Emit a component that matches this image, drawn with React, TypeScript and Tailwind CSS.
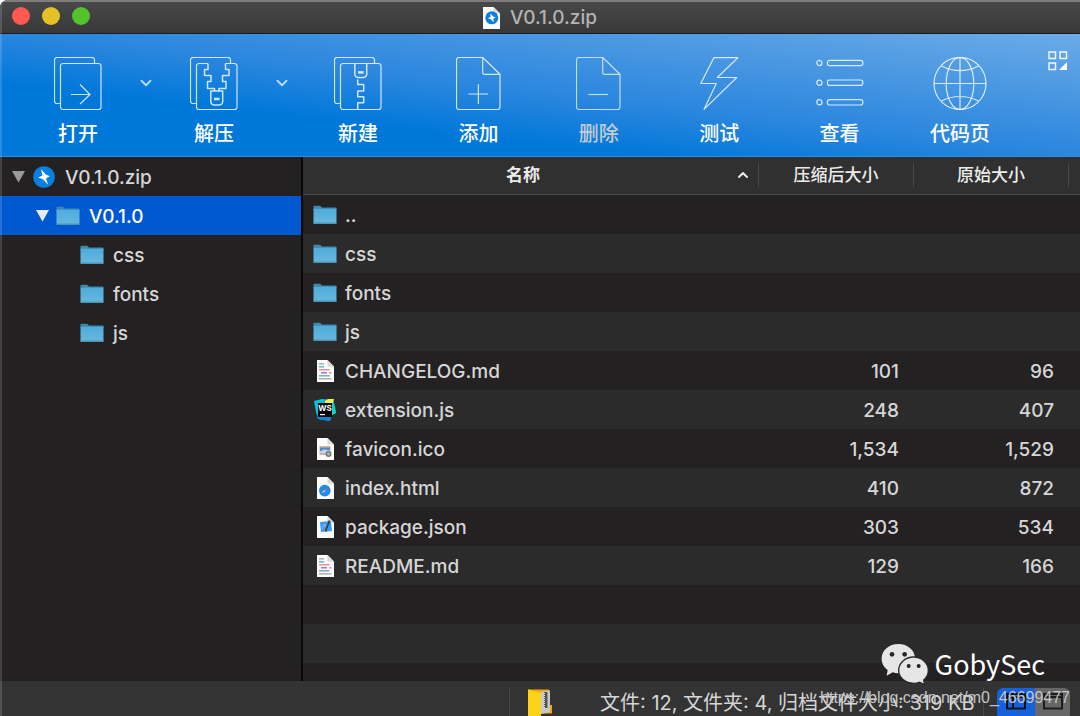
import { useState } from 'react';
import type { ReactNode } from 'react';
import { ChevronDown, ChevronUp } from 'lucide-react';

type IconKind = 'folder' | 'text' | 'webstorm' | 'image' | 'html' | 'xcode';

interface Entry {
  name: string;
  icon: IconKind;
  packed?: string;
  size?: string;
}

const entries: Entry[] = [
  { name: '..', icon: 'folder' },
  { name: 'css', icon: 'folder' },
  { name: 'fonts', icon: 'folder' },
  { name: 'js', icon: 'folder' },
  { name: 'CHANGELOG.md', icon: 'text', packed: '101', size: '96' },
  { name: 'extension.js', icon: 'webstorm', packed: '248', size: '407' },
  { name: 'favicon.ico', icon: 'image', packed: '1,534', size: '1,529' },
  { name: 'index.html', icon: 'html', packed: '410', size: '872' },
  { name: 'package.json', icon: 'xcode', packed: '303', size: '534' },
  { name: 'README.md', icon: 'text', packed: '129', size: '166' },
];

/* ---------- toolbar icons ---------- */

function LineIcon({ width, children }: { width: number; children: ReactNode }) {
  return (
    <svg
      width={width}
      height="54"
      viewBox={`0 0 ${width} 54`}
      fill="none"
      stroke="currentColor"
      strokeWidth="1.2"
      strokeLinejoin="round"
      aria-hidden="true"
    >
      {children}
    </svg>
  );
}

const backSheet = 'M6.5 46.5H3A2.5 2.5 0 0 1 .5 44V3A2.5 2.5 0 0 1 3 .5H38A2.5 2.5 0 0 1 40.5 3V6.5';

function OpenIcon() {
  return (
    <LineIcon width={48}>
      <path d={backSheet} />
      <rect x="6.5" y="6.5" width="40.5" height="46" rx="2.5" />
      <path d="M17 37.5H36M26 27.5L36 37.5L26 47" />
    </LineIcon>
  );
}

function ExtractIcon() {
  return (
    <LineIcon width={48}>
      <path d={backSheet} />
      <path d="M18 6.5H9A2.5 2.5 0 0 0 6.5 9V50A2.5 2.5 0 0 0 9 52.5H44.5A2.5 2.5 0 0 0 47 50V9A2.5 2.5 0 0 0 44.5 6.5H35.5" />
      <path
        strokeWidth="1.5"
        d="M18 6.5V12.5H14.5V18.5H21V24.5H17.5V31.5H24.5V34M35.5 6.5V12.5H39V18.5H32.5V24.5H36V31.5H29V34"
      />
      <path strokeWidth="1.5" d="M20.8 34H32.7V44.5A3.5 3.5 0 0 1 29.2 48H24.3A3.5 3.5 0 0 1 20.8 44.5Z" />
      <path strokeWidth="2.6" d="M24 42H29.6" />
    </LineIcon>
  );
}

function NewIcon() {
  return (
    <LineIcon width={48}>
      <path d={backSheet} />
      <rect x="6.5" y="6.5" width="40.5" height="46" rx="2.5" />
      <path strokeWidth="1.5" d="M20.8 7V17A3.5 3.5 0 0 0 24.3 20.5H29.2A3.5 3.5 0 0 0 32.7 17V7" />
      <path strokeWidth="2.6" d="M24 15.4H29.6" />
      <path strokeWidth="1.5" d="M23.7 22.5V27.5H29.7V34H23.7V39.7H29.7V45.7H23.7V52" />
    </LineIcon>
  );
}

function SheetIcon({ minus }: { minus?: boolean }) {
  return (
    <LineIcon width={45}>
      <path d="M26.7 .5H3A2.5 2.5 0 0 0 .5 3V50A2.5 2.5 0 0 0 3 52.5H41.5A2.5 2.5 0 0 0 44 50V17.3ZM26.7 .5V15.8A1.5 1.5 0 0 0 28.2 17.3H44" />
      <path d={minus ? 'M12.3 37.5H32' : 'M12.3 37H32M22.4 27.2V47'} />
    </LineIcon>
  );
}

function BoltIcon() {
  return (
    <LineIcon width={39}>
      <path d="M14 .6H38L17.3 20.5H36.7L4 52.4L16.3 26.5H.8Z" />
    </LineIcon>
  );
}

function ListIcon() {
  return (
    <LineIcon width={48}>
      {[6, 25.7, 45.3].map((y) => (
        <g key={y}>
          <circle cx="3.4" cy={y} r="2.6" />
          <rect x="11.4" y={y - 2.7} width="35.4" height="5.4" rx="2.2" />
        </g>
      ))}
    </LineIcon>
  );
}

function GlobeIcon() {
  return (
    <LineIcon width={54}>
      <circle cx="27" cy="26.5" r="26" />
      <ellipse cx="27" cy="26.5" rx="13.8" ry="26" />
      <path d="M27 .5V52.5M1 26.5H53M8.5 9Q27 18.4 45.5 9M8.5 44Q27 35 45.5 44" />
    </LineIcon>
  );
}

/* ---------- file icons ---------- */

function FolderIcon() {
  return (
    <svg width="24" height="20" viewBox="0 0 24 20" aria-hidden="true">
      <defs>
        <linearGradient id="folder" x1="0" y1="0" x2="0" y2="1">
          <stop offset="0" stopColor="#4eacdc" />
          <stop offset="1" stopColor="#69b8dc" />
        </linearGradient>
      </defs>
      <path d="M.5 4V1.5Q.5 .8 1.2 .8H7.2L9 2.6H22.8Q23.5 2.6 23.5 3.3V5H.5Z" fill="#3f88ab" />
      <path d="M.5 3.8H23.5V18Q23.5 19 22.5 19H1.5Q.5 19 .5 18Z" fill="url(#folder)" />
      <path d="M.5 17.6H23.5V18Q23.5 19 22.5 19H1.5Q.5 19 .5 18Z" fill="#4d94b5" />
    </svg>
  );
}

function Sheet({ children }: { children: ReactNode }) {
  return (
    <svg width="17" height="22" viewBox="0 0 17 22" aria-hidden="true">
      <path d="M0 0H10.5L17 6.5V22H0Z" fill="#fbfbfb" />
      <path d="M10.5 0L17 6.5H10.5Z" fill="#d9d9d9" />
      {children}
    </svg>
  );
}

function BoltBadge({ size }: { size: number }) {
  return (
    <svg width={size} height={size} viewBox="0 0 22 22" aria-hidden="true">
      <circle cx="11" cy="11" r="10.8" fill="#0a7fe0" />
      <path d="M8 3.2L12.8 8.6L16.8 10.2L13 12.4L15.2 18.8L9.8 13.2L5.2 11.6L9.4 9.6Z" fill="#fff" />
    </svg>
  );
}

function FileIcon({ kind }: { kind: IconKind }) {
  switch (kind) {
    case 'folder':
      return <FolderIcon />;
    case 'text':
      return (
        <Sheet>
          <g strokeWidth="1.4">
            <path d="M2 3.8H7" stroke="#a9a9a9" />
            <path d="M2 6.8H7" stroke="#58b5b5" />
            <path d="M2 9.8H12.5" stroke="#e58a8a" />
            <path d="M4 12.8H10" stroke="#9a62f2" />
            <path d="M12 12.8H14.5" stroke="#e58a8a" />
            <path d="M2 15.8H12.5" stroke="#58b5b5" />
            <path d="M2 18.8H14.5" stroke="#a9a9a9" />
          </g>
        </Sheet>
      );
    case 'webstorm':
      return (
        <svg width="24" height="24" viewBox="0 0 24 24" aria-hidden="true">
          <path d="M1 3L9 1L20 2L22 8L23 15L19 17L17 23L5 21L3 14Z" fill="#07c3d8" />
          <path d="M4 17L18 18L17 23L5 21Z" fill="#1482d6" />
          <path d="M12 3L15 1H21L20 5H12Z" fill="#f5ee4e" />
          <path d="M19 6L21 8L23 15L19 17Z" fill="#0dd6c0" />
          <rect x="5" y="5" width="14" height="14" fill="#080808" />
          <text x="5.2" y="13" fontSize="8" fontWeight="700" fill="#fff" fontFamily="Inter, sans-serif">WS</text>
          <path d="M7 16.6H12" stroke="#fff" strokeWidth="1.2" />
        </svg>
      );
    case 'image':
      return (
        <Sheet>
          <rect x="2.5" y="8" width="11" height="9" fill="#d8b48c" />
          <rect x="3" y="9.5" width="10" height="6" fill="#4e8bd0" />
          <path d="M3 13.5L7 11.5L13 12.5V15.5H3Z" fill="#c3d6e6" />
          <circle cx="11.5" cy="16" r="3" fill="#77767a" />
          <circle cx="11.5" cy="16" r="1.4" fill="#b8b8ba" />
        </Sheet>
      );
    case 'html':
      return (
        <Sheet>
          <circle cx="7.8" cy="13.6" r="5.8" fill="#1f8be6" />
          <path d="M10.8 10.6L8.5 14.3L7.1 12.9Z" fill="#f0624a" />
          <path d="M4.8 16.6L7.1 12.9L8.5 14.3Z" fill="#b9dcf8" />
        </Sheet>
      );
    case 'xcode':
      return (
        <Sheet>
          <path d="M3 6L14 5L15 15L4 16Z" fill="#3b9bf0" />
          <path d="M5 13.5L7.5 8L10.5 13" stroke="#7fc0f8" strokeWidth="1" fill="none" />
          <path d="M12.5 4.5L8.5 15.5" stroke="#3c3c42" strokeWidth="1.8" />
        </Sheet>
      );
  }
}

/* ---------- pieces ---------- */

interface ToolProps {
  label: string;
  icon: ReactNode;
  className?: string;
  disabled?: boolean;
}

function Tool({ label, icon, className = 'w-24', disabled }: ToolProps) {
  return (
    <button
      type="button"
      disabled={disabled}
      className={`${className} shrink-0 flex flex-col items-center gap-[9px] text-xl leading-7 font-medium ${
        disabled ? 'text-[#c3cbd4]' : 'text-white'
      }`}
    >
      <span className={disabled ? 'text-white/70' : 'text-white/80'}>{icon}</span>
      {label}
    </button>
  );
}

function DropButton({ label }: { label: string }) {
  return (
    <button type="button" aria-label={label} className="w-14 h-[52px] shrink-0 flex items-center justify-center text-white/70">
      <ChevronDown size={18} strokeWidth={2.5} />
    </button>
  );
}

interface TreeRowProps {
  name: string;
  icon: ReactNode;
  indent: string;
  expandable?: boolean;
  selected: boolean;
  onSelect: () => void;
}

function TreeRow({ name, icon, indent, expandable, selected, onSelect }: TreeRowProps) {
  return (
    <button
      type="button"
      onClick={onSelect}
      className={`${indent} h-[39px] w-full flex items-center gap-[7px] text-left ${
        selected ? 'bg-[#0058d0] text-white' : 'text-[#d6d6d6]'
      }`}
    >
      {expandable && (
        <svg
          width="13"
          height="12"
          viewBox="0 0 13 12"
          aria-hidden="true"
          className={selected ? 'text-[#e3ecfa]' : 'text-[#9b9a9b]'}
        >
          <path d="M0 0H13L6.5 11.5Z" fill="currentColor" />
        </svg>
      )}
      <span className="w-6 flex justify-center">{icon}</span>
      <span className="pl-[2px] pt-[2px]">{name}</span>
    </button>
  );
}

function WeChatLogo() {
  return (
    <svg width="48" height="42" viewBox="0 0 144 126" aria-hidden="true">
      <path d="M52 3C24 3 2 22 2 47C2 61 9 73 20 81L17 98L35 88C40 90 46 91 52 91C80 91 102 71 102 47C102 22 80 3 52 3Z" fill="#e6e6e6" />
      <path
        d="M98 42C73 42 53 60 53 82C53 104 73 121 98 121C104 121 110 120 115 118L131 125L128 111C137 104 142 94 142 82C142 60 122 42 98 42Z"
        fill="#e6e6e6"
        stroke="#2a2a2a"
        strokeWidth="4"
      />
      <g fill="#262626">
        <circle cx="33" cy="34" r="7" />
        <circle cx="71" cy="34" r="7" />
        <circle cx="83" cy="69" r="6" />
        <circle cx="113" cy="69" r="6" />
      </g>
    </svg>
  );
}

export default function App() {
  const [selected, setSelected] = useState('V0.1.0');
  const [showTree, setShowTree] = useState(true);

  return (
    <div className="relative h-screen min-h-[600px] min-w-[900px] overflow-hidden flex flex-col rounded-tl-lg bg-[#232122] text-[#d6d6d6] text-[19px] leading-7 font-medium font-['Inter','Noto_Sans_CJK_SC',sans-serif]">
      {/* Title bar */}
      <header className="h-[34px] shrink-0 relative flex items-center justify-center gap-[10px] bg-linear-to-b from-[#484848] to-[#383838] border-t-2 border-t-[#7d7d7d] border-b border-b-[#1b1b1b]">
        <div className="absolute left-3 top-[5px] flex gap-3">
          <button type="button" aria-label="关闭" className="size-[18px] rounded-full bg-[#ff5a52]" />
          <button type="button" aria-label="最小化" className="size-[18px] rounded-full bg-[#e6c029]" />
          <button type="button" aria-label="缩放" className="size-[18px] rounded-full bg-[#53c22b]" />
        </div>
        <Sheet>
          <circle cx="8.8" cy="10.8" r="6.5" fill="#0a7fe0" />
          <path d="M7.4 6.4L9.9 9.3L12.6 10.6L10.2 12L11 15.4L8 12.5L5 11.2L7.6 9.8Z" fill="#fff" />
        </Sheet>
        <h1 className="text-[#b3b3b3]">V0.1.0.zip</h1>
      </header>

      {/* Toolbar */}
      <div className="shrink-0 flex items-start pl-[38px] pt-[23px] pb-2 border-b border-b-[#2f8de6] bg-[linear-gradient(to_top_right,#0078da_0%,#0078da_30%,#2a86de_50%,#4a98e2_75%,#6cabe8_100%)]">
        <Tool label="打开" icon={<OpenIcon />} className="w-20" />
        <DropButton label="打开选项" />
        <Tool label="解压" icon={<ExtractIcon />} className="w-20" />
        <DropButton label="解压选项" />
        <div className="flex-1 flex justify-between">
          <Tool label="新建" icon={<NewIcon />} />
          <Tool label="添加" icon={<SheetIcon />} />
          <Tool label="删除" icon={<SheetIcon minus />} disabled />
          <Tool label="测试" icon={<BoltIcon />} />
          <Tool label="查看" icon={<ListIcon />} />
          <Tool label="代码页" icon={<GlobeIcon />} />
        </div>
        <button type="button" aria-label="自定义工具栏" className="w-[72px] -mt-[6px] pr-3 flex justify-end text-white/90">
          <svg width="20" height="20" viewBox="0 0 20 20" fill="none" stroke="currentColor" strokeWidth="1.5">
            <path d="M1 1H7.5V7.5H1ZM12 1H18.5V7.5H12ZM1 12H7.5V18.5H1Z" />
            <path d="M19 11V19H11Z" fill="#fff" stroke="none" />
          </svg>
        </button>
      </div>

      <div className="flex-1 min-h-0 flex">
        {/* Folder tree */}
        {showTree && (
          <nav className="w-[303px] shrink-0 border-r-2 border-r-[#080808]">
            <TreeRow
              name="V0.1.0.zip"
              icon={<BoltBadge size={22} />}
              indent="pl-3"
              expandable
              selected={selected === 'V0.1.0.zip'}
              onSelect={() => setSelected('V0.1.0.zip')}
            />
            <TreeRow
              name="V0.1.0"
              icon={<FolderIcon />}
              indent="pl-9"
              expandable
              selected={selected === 'V0.1.0'}
              onSelect={() => setSelected('V0.1.0')}
            />
            {['css', 'fonts', 'js'].map((name) => (
              <TreeRow
                key={name}
                name={name}
                icon={<FolderIcon />}
                indent="pl-20"
                selected={selected === name}
                onSelect={() => setSelected(name)}
              />
            ))}
          </nav>
        )}

        {/* File list */}
        <main className="flex-1 min-w-0 flex flex-col overflow-hidden">
          <table className="w-full shrink-0 table-fixed border-collapse">
            <colgroup>
              <col />
              <col className="w-[155px]" />
              <col className="w-[155px]" />
              <col className="w-[11px]" />
            </colgroup>
            <thead>
              <tr className="h-[38px] bg-[#303030] text-[17px] leading-6 text-[#ececec] shadow-[inset_0_-1px_#4a4a4a]">
                <th scope="col" className="p-0 pb-[2px] font-bold">
                  <div className="flex items-center pr-[7px] border-r border-r-[#484848]">
                    <span className="flex-1 pl-2">名称</span>
                    <ChevronUp size={16} strokeWidth={3} aria-hidden="true" />
                  </div>
                </th>
                <th scope="col" className="p-0 pb-[2px] font-medium">
                  <div className="border-r border-r-[#484848]">压缩后大小</div>
                </th>
                <th scope="col" className="p-0 pb-[2px] font-medium">
                  <div className="border-r border-r-[#484848]">原始大小</div>
                </th>
                <td />
              </tr>
            </thead>
            <tbody>
              {entries.map((entry) => (
                <tr key={entry.name} className="h-[39px] odd:bg-[#232122] even:bg-[#2b2b2b]">
                  <td className="p-0">
                    <div className="flex items-center gap-2 pl-[10px]">
                      <span className="w-6 flex justify-center">
                        <FileIcon kind={entry.icon} />
                      </span>
                      <span className="pt-[2px]">{entry.name}</span>
                    </div>
                  </td>
                  <td className="p-0 pt-[2px] pr-[15px] text-right">{entry.packed}</td>
                  <td className="p-0 pt-[2px] pr-[15px] text-right">{entry.size}</td>
                  <td />
                </tr>
              ))}
            </tbody>
          </table>
          <div className="flex-1 bg-[repeating-linear-gradient(#232122_0_39px,#2b2b2b_39px_78px)]" />
        </main>
      </div>

      {/* Status bar */}
      <footer className="h-[35px] shrink-0 flex items-start justify-end pt-[7px] pr-[10px] bg-[#333333] overflow-hidden">
        <div className="h-7 border-l border-l-[#484848] pl-[17px] w-[91px]">
          <svg width="26" height="28" viewBox="0 0 26 28" aria-hidden="true">
            <path d="M1 1.5L22 1.5V17H25V25.5H14V28H1Z" fill="#f2a900" />
            <path d="M13 4L23 2.5V24L14 26Z" fill="#c9c9c9" />
            <path d="M17 4V20H20.5V4Z" fill="#555" />
            <path d="M17.5 5V20" stroke="#e8e8e8" strokeWidth="1" strokeDasharray="1 1" />
            <path d="M1 1.5L14 5V28H1Z" fill="#ffd21a" />
          </svg>
        </div>
        <p className="w-[383px] pt-px whitespace-nowrap text-xl leading-7 font-normal">
          文件: 12, 文件夹: 4, 归档文件大小: 319 KB
        </p>
        <div className="h-7 w-[14px] border-l border-l-[#484848]" />
        <button
          type="button"
          aria-label="显示边栏"
          onClick={() => setShowTree(true)}
          className="w-[38px] h-8 flex justify-center pt-[5px] rounded-l-md bg-[#1562dc] text-[#101418]"
        >
          <svg width="20" height="17" viewBox="0 0 20 17" fill="none" stroke="currentColor" strokeWidth="2">
            <path d="M1 1H19V15.5H1ZM1 4H19M7 4V15.5" />
          </svg>
        </button>
        <button
          type="button"
          aria-label="隐藏边栏"
          onClick={() => setShowTree(false)}
          className="w-[35px] h-8 flex justify-center pt-[5px] rounded-r-md bg-[#676767] text-[#1c1c1c]"
        >
          <svg width="20" height="17" viewBox="0 0 20 17" fill="none" stroke="currentColor" strokeWidth="2">
            <path d="M1 1H19V15.5H1ZM1 4H19" />
          </svg>
        </button>
      </footer>

      {/* Account marks lying over the window */}
      <div className="pointer-events-none absolute right-[35px] bottom-[31px] flex items-center gap-[6px]">
        <WeChatLogo />
        <span className="text-[27px] text-white font-normal font-['Noto_Sans_CJK_SC',sans-serif]">GobySec</span>
      </div>
      <span className="pointer-events-none absolute right-[10px] bottom-[6px] text-base leading-6 font-normal text-[#c4c4c4] font-['Liberation_Sans',sans-serif]">
        https://blog.csdn.net/m0_46699477
      </span>
      <div className="pointer-events-none absolute inset-0 border-l-2 border-l-white/15 rounded-tl-lg" />
    </div>
  );
}
